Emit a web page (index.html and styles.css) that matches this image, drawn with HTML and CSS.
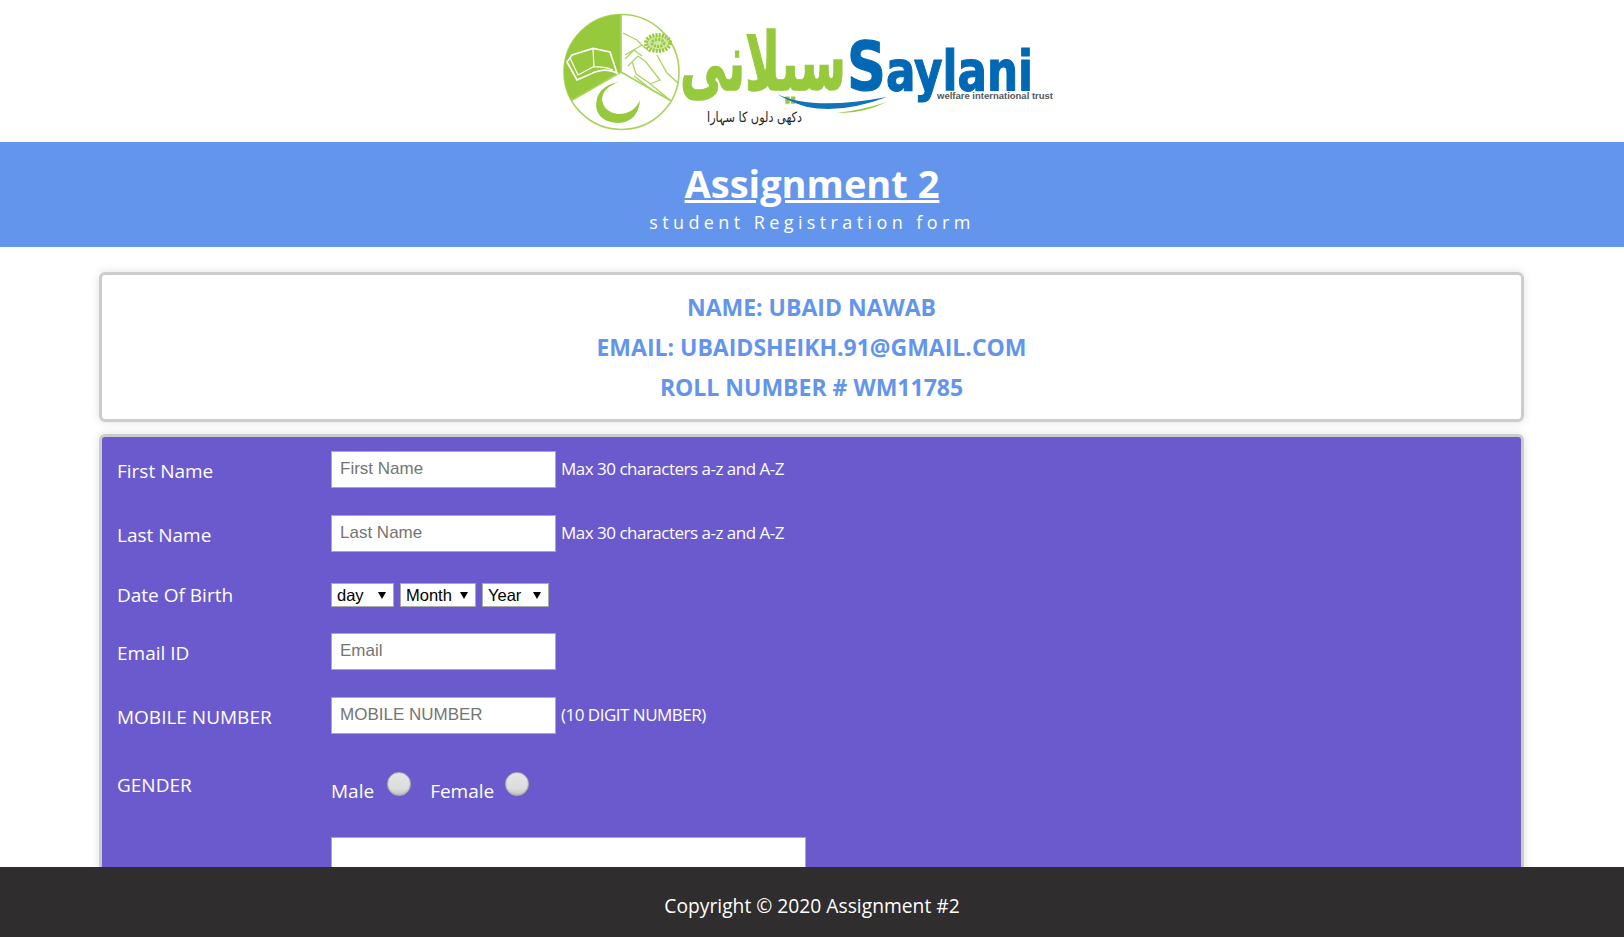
FILE: index.html
```html
<!DOCTYPE html>
<html lang="en">
<head>
  <meta charset="UTF-8" />
  <meta name="viewport" content="width=device-width, initial-scale=1.0" />
  <title>Assignment 2</title>
  <link rel="stylesheet" href="styles.css">
</head>
<body>
  <main class="page">
    <header class="logo-bar">
      <svg class="logo" viewBox="0 0 500 130" width="500" height="130" role="img" aria-label="Saylani welfare international trust">
        <!-- emblem -->
        <circle cx="59.5" cy="66" r="57.5" fill="#fff" stroke="#a9d45f" stroke-width="1.6"/>
        <path d="M59 66 V8.5 A57.5 57.5 0 0 0 9.5 94.5 Z" fill="#97c93c"/>
        <path d="M59 8 V66 L9.5 94.5 M59 66 L109.5 95" fill="none" stroke="#a9d45f" stroke-width="1.8"/>
        <path d="M5 56 L15 74 L33 66 Q45 62 55 67 L48 46 L31 42.500 L10 49 Z" fill="none" stroke="#fff" stroke-width="1.7"/>
        <path d="M8 52 L16 69 L31 61 Q42 60 51 64 M31 43 L32 61" fill="none" stroke="#fff" stroke-width="1.2"/>
        <path d="M57 76 Q34 80 34 100 Q36 116 56 117 Q76 116 78 94 Q72 108 56 108 Q42 106 40 94 Q40 82 57 76 Z" fill="#97c93c"/>
        <path d="M61 27 L75 34 L83 42 M63 49 L80 39 L88 46 M63 53 L72 44 L80 50 M66 60 L76 50 L84 56 M70 55 L74 68 L86 76 L108 94 M95 49 L105 67 L116 77 M84 56 L98 74 L88 78 M72 70 L90 84 L104 92" fill="none" stroke="#a9d45f" stroke-width="1.3"/>
        <ellipse cx="96" cy="37" rx="12" ry="8" fill="#cfe6a4" stroke="#97c93c" stroke-width="4" stroke-dasharray="2 1.2"/>
        <ellipse cx="96" cy="37" rx="6" ry="3.500" fill="none" stroke="#97c93c" stroke-width="3" stroke-dasharray="2 1.2"/>
        <!-- wordmark -->
        <text class="logo-urdu-name" transform="translate(118 84) scale(1 1.22)" textLength="166" lengthAdjust="spacingAndGlyphs">سیلانی</text>
        <path d="M215 88 Q250 105 325 91 Q280 108 245 101 Q228 96 215 88 Z" fill="#1272ba"/>
        <path d="M275 107 Q300 104 325 96 Q300 108 275 107 Z" fill="#97c93c"/>
        <text class="logo-name" x="285" y="84" textLength="186" lengthAdjust="spacingAndGlyphs"><tspan class="logo-name-cap">S</tspan>aylani</text>
        <text class="logo-trust" x="375" y="93" textLength="116" lengthAdjust="spacingAndGlyphs">welfare international trust</text>
        <text class="logo-urdu-tag" x="145" y="116" textLength="95" lengthAdjust="spacingAndGlyphs">دکھی دلوں کا سہارا</text>
      </svg>
    </header>

    <section class="banner">
      <h1>Assignment 2</h1>
      <p>student Registration form</p>
    </section>

    <section class="card details">
      <h2>NAME: UBAID NAWAB</h2>
      <h2>EMAIL: UBAIDSHEIKH.91@GMAIL.COM</h2>
      <h2>ROLL NUMBER # WM11785</h2>
    </section>

    <form class="card reg-form">
      <div class="row row-text">
        <label>First Name</label>
        <input type="text" placeholder="First Name">
        <span class="hint">Max 30 characters a-z and A-Z</span>
      </div>
      <div class="row row-text">
        <label>Last Name</label>
        <input type="text" placeholder="Last Name">
        <span class="hint">Max 30 characters a-z and A-Z</span>
      </div>
      <div class="row row-date">
        <label>Date Of Birth</label>
        <div class="selects">
          <select class="sel-day"><option>day</option></select>
          <select class="sel-month"><option>Month</option></select>
          <select class="sel-year"><option>Year</option></select>
        </div>
      </div>
      <div class="row row-text">
        <label>Email ID</label>
        <input type="email" placeholder="Email">
      </div>
      <div class="row row-mobile">
        <label>MOBILE NUMBER</label>
        <input type="text" placeholder="MOBILE NUMBER">
        <span class="hint">(10 DIGIT NUMBER)</span>
      </div>
      <div class="row row-gender">
        <label>GENDER</label>
        <div class="radios">
          <span>Male</span><input type="radio" name="gender">
          <span>Female</span><input class="radio-last" type="radio" name="gender">
        </div>
      </div>
      <div class="row row-address">
        <label></label>
        <textarea></textarea>
      </div>
    </form>
  </main>

  <footer class="footer">Copyright © 2020 Assignment #2</footer>
</body>
</html>
```

FILE: styles.css
```css
html, body {
  height: 100%;
}
body {
  margin: 0;
  display: flex;
  flex-direction: column;
  overflow: hidden;
  font-family: 'Open Sans', 'Noto Sans', sans-serif;
  background: #ffffff;
  color: #ffffff;
}
.page {
  flex: 1;
  min-height: 0;
  overflow: hidden;
}
.logo-bar {
  height: 142px;
  display: flex;
  align-items: center;
  justify-content: center;
}
.logo {
  display: block;
}
.logo-urdu-name {
  font-family: 'DejaVu Sans', sans-serif;
  font-weight: 700;
  font-size: 66px;
  fill: #97c93c;
  stroke: #97c93c;
  stroke-width: 1.2px;
}
.logo-name {
  font-family: 'DejaVu Sans', sans-serif;
  font-weight: 700;
  font-size: 55px;
  fill: #0068b4;
  stroke: #0068b4;
  stroke-width: 1.2px;
}
.logo-name-cap {
  font-size: 68px;
}
.logo-trust {
  font-family: 'Liberation Sans', sans-serif;
  font-weight: 700;
  font-size: 9px;
  fill: #55585a;
}
.logo-urdu-tag {
  font-family: 'DejaVu Sans', sans-serif;
  font-size: 14px;
  fill: #222222;
}
.banner {
  height: 105px;
  box-sizing: border-box;
  padding-top: 15px;
  background: #6495ed;
  text-align: center;
}
.banner h1 {
  margin: 0;
  font-size: 38px;
  line-height: 52px;
  font-weight: 700;
  text-decoration: underline;
}
.banner p {
  margin: 0;
  font-size: 18px;
  line-height: 26px;
  letter-spacing: 4.4px;
}
.card {
  margin: 0 100px 0 99px;
  border: 3px solid #cccccc;
  border-radius: 6px;
  box-shadow: 0 0 10px rgba(0, 0, 0, 0.12);
}
.details {
  margin-top: 25px;
  height: 150px;
  box-sizing: border-box;
  padding-top: 12px;
  text-align: center;
}
.details h2 {
  margin: 0;
  font-size: 23px;
  line-height: 40px;
  font-weight: 700;
  color: #6495ed;
}
.reg-form {
  margin-top: 12px;
  padding: 14px 15px 40px;
  background: #6a5acd;
}
.row {
  display: flex;
  align-items: center;
  font-size: 19px;
}
.row label {
  flex: 0 0 214px;
}
.row input[type="text"],
.row input[type="email"] {
  box-sizing: border-box;
  width: 225px;
  height: 37px;
  margin: 0;
  padding: 0 8px 2px;
  border: 1px solid #a9a9a9;
  background: #ffffff;
  font-family: 'Liberation Sans', sans-serif;
  font-size: 17px;
}
input::placeholder {
  color: #757575;
}
.hint {
  margin: -2px 0 0 5px;
  font-size: 17px;
  letter-spacing: -0.5px;
}
.row-text {
  margin-bottom: 27px;
}
.row-text label,
.row-mobile label {
  padding-top: 3px;
}
.row-date {
  margin: 30px 0 25px;
}
.row-mobile {
  margin-bottom: 38px;
}
.selects {
  display: flex;
  gap: 6px;
}
.selects select {
  box-sizing: border-box;
  height: 24px;
  margin: 0;
  padding: 0 0 0 5px;
  appearance: none;
  border: 1px solid #a9a9a9;
  border-radius: 0;
  font-family: 'Liberation Sans', sans-serif;
  font-size: 16.5px;
  color: #000000;
  background: #ffffff url("data:image/svg+xml,%3Csvg xmlns='http://www.w3.org/2000/svg' width='8' height='8'%3E%3Cpath d='M0 1h8L4 8z'/%3E%3C/svg%3E") no-repeat right 7px center;
}
.sel-day { width: 63px; }
.sel-month { width: 76px; }
.sel-year { width: 67px; }
.row-gender {
  align-items: flex-start;
  height: 65px;
}
.radios {
  display: flex;
  align-items: flex-start;
}
.radios span {
  margin-top: 6px;
}
.radios input {
  box-sizing: border-box;
  width: 24px;
  height: 24px;
  margin: 0 19px 0 13px;
  appearance: none;
  border: 1px solid #b0b0b0;
  border-radius: 50%;
  background: linear-gradient(#e6e6e6, #dcdcdc 70%, #c8c8c8);
  box-shadow: inset 0 -1px 1px rgba(0, 0, 0, 0.12);
}
.radios .radio-last {
  margin-left: 11px;
}
.row-address {
  align-items: flex-start;
}
.row-address textarea {
  box-sizing: border-box;
  width: 475px;
  height: 120px;
  margin: 0;
  border: 1px solid #a9a9a9;
  background: #ffffff;
}
.footer {
  flex: 0 0 70px;
  box-sizing: border-box;
  height: 70px;
  padding-top: 8px;
  background: #2f2d2e;
  text-align: center;
  font-size: 19.25px;
  line-height: 62px;
}
```
